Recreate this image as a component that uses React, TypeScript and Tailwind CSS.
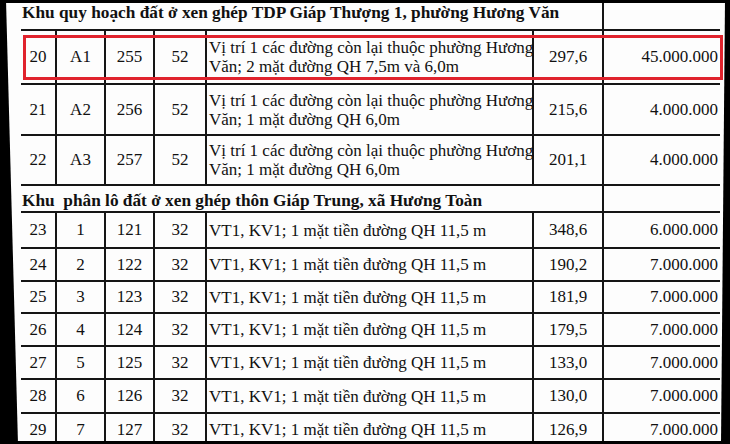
import React from "react";

type Row = { h: string; stt: string; lo: string; thua: string; to: string; desc: string[]; dt: string; gia: string };

const rowsA: Row[] = [
  { h: "h-[54px]", stt: "20", lo: "A1", thua: "255", to: "52", desc: ["Vị trí 1 các đường còn lại thuộc phường Hương", "Văn; 2 mặt đường QH 7,5m và 6,0m"], dt: "297,6", gia: "45.000.000" },
  { h: "h-[51px]", stt: "21", lo: "A2", thua: "256", to: "52", desc: ["Vị trí 1 các đường còn lại thuộc phường Hương", "Văn; 1 mặt đường QH 6,0m"], dt: "215,6", gia: "4.000.000" },
  { h: "h-[50px]", stt: "22", lo: "A3", thua: "257", to: "52", desc: ["Vị trí 1 các đường còn lại thuộc phường Hương", "Văn; 1 mặt đường QH 6,0m"], dt: "201,1", gia: "4.000.000" },
];

const d = ["VT1, KV1; 1 mặt tiền đường QH 11,5 m"];
const rowsB: Row[] = [
  { h: "h-[36px]", stt: "23", lo: "1", thua: "121", to: "32", desc: d, dt: "348,6", gia: "6.000.000" },
  { h: "h-[33px]", stt: "24", lo: "2", thua: "122", to: "32", desc: d, dt: "190,2", gia: "7.000.000" },
  { h: "h-[32px]", stt: "25", lo: "3", thua: "123", to: "32", desc: d, dt: "181,9", gia: "7.000.000" },
  { h: "h-[33px]", stt: "26", lo: "4", thua: "124", to: "32", desc: d, dt: "179,5", gia: "7.000.000" },
  { h: "h-[33px]", stt: "27", lo: "5", thua: "125", to: "32", desc: d, dt: "133,0", gia: "7.000.000" },
  { h: "h-[34px]", stt: "28", lo: "6", thua: "126", to: "32", desc: d, dt: "130,0", gia: "7.000.000" },
  { h: "h-[33px]", stt: "29", lo: "7", thua: "127", to: "32", desc: d, dt: "126,9", gia: "7.000.000" },
];

function DataRow({ r }: { r: Row }) {
  const c = "flex items-center justify-center border-r-2 border-[#151515]";
  return (
    <div className={`grid grid-cols-[36px_49px_49px_52px_327px_70px_116px] border-b-2 border-[#151515] ${r.h}`}>
      <div className={c}>{r.stt}</div>
      <div className={c}>{r.lo}</div>
      <div className={c}>{r.thua}</div>
      <div className={c}>{r.to}</div>
      <div className="flex flex-col justify-center border-r-2 border-[#151515] pl-[2px] leading-[19px]">
        {r.desc.map((t, i) => (
          <div key={i} className="whitespace-nowrap">{t}</div>
        ))}
      </div>
      <div className={c}>{r.dt}</div>
      <div className="flex items-center justify-end pr-[2px]">{r.gia}</div>
    </div>
  );
}

function Section({ h, pad, title }: { h: string; pad: string; title: string }) {
  return (
    <div className={`grid grid-cols-[583px_116px] border-b-2 border-[#151515] ${h}`}>
      <div className={`flex items-center border-r-2 border-[#151515] pl-[1px] font-bold whitespace-pre text-[17.3px] ${pad}`}>{title}</div>
      <div />
    </div>
  );
}

export default function App() {
  return (
    <div className="relative w-[730px] h-[444px] overflow-hidden bg-[#fdfdfd] text-[17px] text-[#111111] font-['Liberation_Serif','Times_New_Roman',serif]">
      <div className="flex flex-col pl-[21px] w-[720px]">
        <Section h="h-[31px]" pad="pb-[4px]" title="Khu quy hoạch đất ở xen ghép TDP Giáp Thượng 1, phường Hương Văn" />
        {rowsA.map((r) => (
          <DataRow key={r.stt} r={r} />
        ))}
        <Section h="h-[27px]" pad="pt-[2px]" title="Khu  phân lô đất ở xen ghép thôn Giáp Trung, xã Hương Toàn" />
        {rowsB.map((r) => (
          <DataRow key={r.stt} r={r} />
        ))}
      </div>

      {/* red highlight box */}
      <div className="absolute left-[23px] top-[35px] w-[700px] h-[45px] border-[3px] border-[#e0232d]" />

      {/* scan edges */}
      <div className="absolute left-0 top-0 w-full h-[3px] bg-black" />
      <div className="absolute left-0 bottom-0 w-full h-[3px] bg-black" />
      <div className="absolute left-0 top-0 w-[20px] h-full bg-black [clip-path:polygon(0_0,6px_0,18px_100%,0_100%)]" />
      <div className="absolute right-0 top-0 w-[12px] h-full bg-black [clip-path:polygon(7px_0,100%_0,100%_100%,3px_100%)]" />
    </div>
  );
}
